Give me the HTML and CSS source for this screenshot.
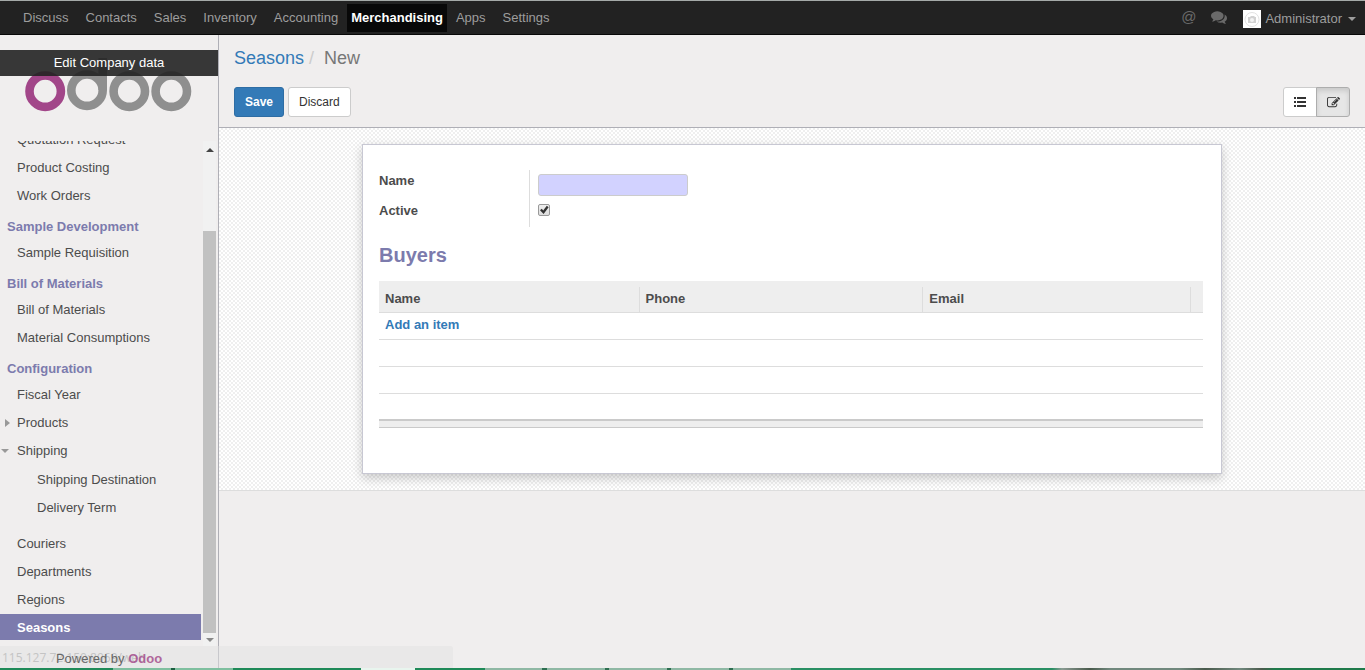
FILE: index.html
```html
<!DOCTYPE html>
<html lang="en">
<head>
<meta charset="utf-8">
<title>Seasons - Odoo</title>
<link rel="stylesheet" href="styles.css">
</head>
<body>
<header class="navbar">
  <nav class="apps">
    <a href="#">Discuss</a>
    <a href="#">Contacts</a>
    <a href="#">Sales</a>
    <a href="#">Inventory</a>
    <a href="#">Accounting</a>
    <a href="#" class="active">Merchandising</a>
    <a href="#">Apps</a>
    <a href="#">Settings</a>
  </nav>
  <div class="systray">
    <button class="tray-button at" aria-label="Mentions">@</button>
    <button class="tray-button" aria-label="Conversations">
      <svg class="icon-comments" viewBox="0 0 1792 1792"><path d="M1408 768q0 139-94 257t-256.500 186.500-353.500 68.500q-86 0-176-16-124 88-278 128-36 9-86 16h-3q-11 0-20.500-8t-11.500-21q-1-3-1-6.500t.5-6.500 2-6l2.500-5 3.500-5.500 4-5 4.500-5 4-4.500q5-6 23-25t26-29.500 22.500-29 25-38.500 20.500-44q-124-72-195-177t-71-224q0-139 94-257t256.500-186.500 353.500-68.500 353.500 68.500 256.500 186.500 94 257zm384 256q0 120-71 224.500t-195 176.500q10 24 20.500 44t25 38.500 22.500 29 26 29.500 23 25q1 1 4 4.500t4.500 5 4 5 3.500 5.500l2.500 5 2 6 .5 6.500-1 6.500q-3 14-13 22t-22 7q-50-7-86-16-154-40-278-128-90 16-176 16-271 0-472-132 58 4 88 4 161 0 309-45t264-129q125-92 192-212t67-254q0-77-23-152 129 71 204 178t75 230z"/></svg>
    </button>
    <button class="user-menu">
      <svg class="avatar" viewBox="0 0 18 18"><path fill="#fff" d="M0 0h18v18H0z"/><circle cx="9" cy="9.500" r="7" fill="none" stroke="#e2e2e2"/><path fill="#d2d2d2" d="M5 7h2l1-1h3l1 1h1v6H5z"/><circle cx="9" cy="10" r="2" fill="#f4f4f4"/></svg>
      Administrator
      <span class="caret"></span>
    </button>
  </div>
</header>

<div class="body">
  <aside class="sidebar">
    <div class="brand">
      <svg class="logo" viewBox="0 0 218 62" role="img" aria-label="Odoo">
        <g fill="none" stroke="#8f8f8f" stroke-width="8.600">
          <circle cx="45.200" cy="41.200" r="15.700" stroke="#a24689"/>
          <circle cx="87" cy="40.200" r="15.700"/>
          <path d="M102.700 8v32"/>
          <circle cx="129.300" cy="41.200" r="15.700"/>
          <circle cx="171.300" cy="41.200" r="15.700"/>
        </g>
      </svg>
      <a href="#" class="edit-company">Edit Company data</a>
    </div>
    <div class="menu-area">
      <nav class="menu">
        <ul>
          <li><a href="#">Quotation Request</a></li>
          <li><a href="#">Product Costing</a></li>
          <li><a href="#">Work Orders</a></li>
        </ul>
        <h2>Sample Development</h2>
        <ul><li><a href="#">Sample Requisition</a></li></ul>
        <h2>Bill of Materials</h2>
        <ul>
          <li><a href="#">Bill of Materials</a></li>
          <li><a href="#">Material Consumptions</a></li>
        </ul>
        <h2>Configuration</h2>
        <ul>
          <li><a href="#">Fiscal Year</a></li>
          <li><a href="#" class="closed">Products</a></li>
          <li><a href="#" class="open">Shipping</a>
            <ul class="submenu">
              <li><a href="#">Shipping Destination</a></li>
              <li><a href="#">Delivery Term</a></li>
            </ul>
          </li>
          <li><a href="#">Couriers</a></li>
          <li><a href="#">Departments</a></li>
          <li><a href="#">Regions</a></li>
          <li><a href="#" class="current">Seasons</a></li>
        </ul>
      </nav>
      <div class="scrollbar">
        <span class="arrow up"></span>
        <span class="thumb"></span>
        <span class="arrow down"></span>
      </div>
    </div>
    <footer class="powered">Powered by <a href="#">Odoo</a></footer>
  </aside>

  <main class="content">
    <div class="control-panel">
      <ol class="breadcrumb">
        <li><a href="#">Seasons</a></li>
        <li>New</li>
      </ol>
      <div class="toolbar">
        <div class="actions">
          <button class="btn primary">Save</button>
          <button class="btn">Discard</button>
        </div>
        <div class="switcher">
          <button class="view" aria-label="List"><svg viewBox="0 0 14 14"><path d="M1 2h2v2H1zM1 6h2v2H1zM1 10h2v2H1zM4 2h9v2H4zM4 6h9v2H4zM4 10h9v2H4z"/></svg></button>
          <button class="view on" aria-label="Form"><svg viewBox="0 0 1792 1792"><path d="M888 1184l116-116-152-152-116 116v56h96v96h56zm440-720q-16-16-33 1l-350 350q-17 17-1 33t33-1l350-350q17-17 1-33zm80 594v190q0 119-84.500 203.500t-203.500 84.500h-832q-119 0-203.500-84.500t-84.500-203.500v-832q0-119 84.500-203.500t203.500-84.500h832q63 0 117 25 15 7 18 23 3 17-9 29l-49 49q-14 14-32 8-23-6-45-6h-832q-66 0-113 47t-47 113v832q0 66 47 113t113 47h832q66 0 113-47t47-113v-126q0-13 9-22l64-64q15-15 35-7t20 29zm-96-738l288 288-672 672h-288v-288zm444 132l-92 92-288-288 92-92q28-28 68-28t68 28l152 152q28 28 28 68t-28 68z"/></svg></button>
        </div>
      </div>
    </div>
    <div class="form-area">
      <form class="sheet">
        <div class="fields">
          <div class="labels">
            <label for="name">Name</label>
            <label for="active">Active</label>
          </div>
          <div class="values">
            <input type="text" id="name" class="text">
            <input type="checkbox" id="active" class="check" checked>
          </div>
        </div>
        <h1>Buyers</h1>
        <table class="list">
          <colgroup><col class="c-name"><col class="c-phone"><col class="c-email"><col class="c-delete"></colgroup>
          <thead><tr><th><div>Name</div></th><th><div>Phone</div></th><th><div>Email</div></th><th><div></div></th></tr></thead>
          <tbody>
            <tr><td colspan="4"><a href="#">Add an item</a></td></tr>
            <tr><td colspan="4"></td></tr>
            <tr><td colspan="4"></td></tr>
            <tr><td colspan="4"></td></tr>
          </tbody>
          <tfoot><tr><td colspan="4"></td></tr></tfoot>
        </table>
      </form>
    </div>
  </main>
</div>
<div class="status-bubble">115.127.72.150:8069/web</div>
<div class="taskbar"></div>
</body>
</html>
```
FILE: styles.css
```css
* { box-sizing: border-box; }

body {
  margin: 0;
  height: 100vh;
  display: flex;
  flex-direction: column;
  position: relative;
  overflow: hidden;
  background: #f0eeee;
  color: #4c4c4c;
  font: 13px/20px "Liberation Sans", Arial, sans-serif;
}

a { color: #337ab7; text-decoration: none; }
button { font: inherit; cursor: pointer; }
ul, ol { list-style: none; margin: 0; padding: 0; }

/* Top bar */
.navbar {
  display: flex;
  justify-content: space-between;
  flex: none;
  height: 35px;
  padding: 3px 9px 0 15px;
  background: #222;
  border-top: 1px solid #a5aaa8;
  border-bottom: 1px solid #080808;
}
.apps { display: flex; gap: 1px; }
.apps a { height: 28px; padding: 0 8px; line-height: 27px; color: #9d9d9d; }
.apps .active { padding: 0 4px; background: #080808; color: #fff; font-weight: bold; }
.systray { display: flex; align-items: center; }
.systray button { border: 0; background: none; color: #9d9d9d; }
.systray .tray-button { height: 28px; padding: 0 8px 4px; color: #6a6a6a; }
.systray .at { padding: 0 7px 4px; font-size: 15px; line-height: 22px; }
.icon-comments { display: block; width: 16px; height: 16px; fill: #6a6a6a; }
.user-menu { display: flex; align-items: center; gap: 4px; padding: 0 0 0 8px; }
.avatar { width: 18px; height: 18px; }
.caret {
  margin-left: 2px;
  border: 4px solid transparent;
  border-top-color: #9d9d9d;
  border-bottom: 0;
}

.body { flex: 1; display: flex; min-height: 0; }

/* Sidebar */
.sidebar {
  flex: none;
  width: 219px;
  display: flex;
  flex-direction: column;
  border-right: 1px solid #afafb6;
}
.brand { position: relative; margin-top: 15px; height: 91px; flex: none; }
.logo { display: block; width: 100%; }
.edit-company {
  position: absolute;
  inset: 0 0 auto;
  height: 26px;
  line-height: 25px;
  text-align: center;
  color: #fff;
  background: rgba(34, 34, 34, 0.9);
}
.menu-area { flex: 1; min-height: 0; display: flex; gap: 2px; padding-right: 2px; }
.menu {
  flex: 1;
  display: flex;
  flex-direction: column;
  justify-content: flex-end;
  overflow: hidden;
  padding-bottom: 6px;
}
.menu ul { display: flex; flex-direction: column; gap: 2px; }
.menu h2 {
  height: 26px;
  margin: 5px 0 0;
  padding-left: 7px;
  font-size: 13px;
  line-height: 28px;
  color: #7c7bad;
}
.menu a { display: block; height: 26px; padding-left: 17px; line-height: 28px; color: #4c4c4c; }
.menu .submenu { padding: 3px 0 8px; }
.menu .submenu a { padding-left: 37px; }
.menu .current { background: #7c7bad; color: #fff; font-weight: bold; }
.closed::before, .open::before {
  content: "";
  float: left;
  margin: 10px 0 0 -12px;
  border: 4px solid transparent;
  border-left: 5px solid #999;
  border-right: 0;
}
.open::before {
  margin: 12px 0 0 -16px;
  border: 4px solid transparent;
  border-top-color: #999;
  border-bottom: 0;
}
.scrollbar {
  width: 13px;
  display: flex;
  flex-direction: column;
  align-items: center;
  padding: 7px 0 4px;
  background: #f1f1f1;
}
.arrow { border: 4px solid transparent; }
.arrow.up { border-top: 0; border-bottom-color: #444; }
.arrow.down { border-bottom: 0; border-top-color: #888; margin-top: 5px; }
.thumb { flex: 1; width: 13px; margin-top: 79px; background: #c1c1c1; }
.powered {
  position: relative;
  z-index: 2;
  flex: none;
  height: 22px;
  line-height: 26px;
  text-align: center;
  color: #666;
}
.powered a { color: #a24689; opacity: 0.8; font-weight: bold; }

/* Control panel */
.content { flex: 1; min-width: 0; }
.control-panel { padding: 13px 15px 10px; border-bottom: 1px solid #afafb6; }
.breadcrumb { display: flex; font-size: 18px; color: #777; }
.breadcrumb li + li::before { content: "/"; padding: 0 10px 0 5px; color: #ccc; }
.toolbar { display: flex; justify-content: space-between; margin-top: 19px; }
.actions { display: flex; gap: 4px; }
.btn {
  height: 30px;
  padding: 0 10px;
  border: 1px solid #ccc;
  border-radius: 3px;
  background: #fff;
  color: #333;
  font-size: 12px;
}
.btn.primary { background: #337ab7; border-color: #2e6da4; color: #fff; font-weight: bold; }
.switcher { display: flex; }
.view {
  display: flex;
  align-items: center;
  justify-content: center;
  width: 34px;
  height: 30px;
  padding: 0;
  border: 1px solid #ccc;
  border-radius: 3px 0 0 3px;
  background: #fff;
}
.view.on {
  margin-left: -1px;
  border-color: #adadad;
  border-radius: 0 3px 3px 0;
  background: #e6e6e6;
  box-shadow: inset 0 3px 5px rgba(0, 0, 0, 0.125);
}
.view svg { width: 14px; height: 14px; fill: #333; }
.view.on svg { width: 13px; height: 13px; }

/* Form */
.form-area {
  padding: 16px;
  border-bottom: 1px solid #ddd;
  background: repeating-conic-gradient(#efefef 0 25%, #fff 0 50%) 0 0 / 4px 4px;
}
.sheet {
  max-width: 860px;
  min-height: 330px;
  margin: 0 auto;
  padding: 25px 18px 45px 16px;
  border: 1px solid #c8c8d3;
  background: #fff;
  box-shadow: 0 4px 10px rgba(0, 0, 0, 0.2);
}
.fields { display: flex; height: 57px; font-weight: bold; }
.labels {
  display: flex;
  flex-direction: column;
  gap: 10px;
  width: 151px;
  padding-top: 1px;
  border-right: 1px solid #ddd;
}
.values { display: flex; flex-direction: column; gap: 8px; padding: 4px 8px; }
.text {
  width: 150px;
  height: 22px;
  padding: 2px 4px;
  border: 1px solid #ccc;
  border-radius: 3px;
  background: #d2d2ff;
}
.check {
  appearance: none;
  width: 12px;
  height: 12px;
  margin: 0;
  border: 1px solid #999;
  border-radius: 2px;
  background: linear-gradient(#eee, #ddd);
}
.check:checked::before {
  content: "";
  display: block;
  height: 10px;
  background: #333;
  clip-path: polygon(10% 52%, 28% 38%, 42% 55%, 78% 8%, 96% 22%, 46% 90%);
}
.sheet h1 { margin: 16px 0 14px; font-size: 20px; line-height: 24px; color: #7c7bad; }
.list { width: 100%; table-layout: fixed; border-collapse: separate; border-spacing: 0; }
.c-name { width: 32%; }
.c-phone { width: 35%; }
.c-email { width: 33%; }
.c-delete { width: 13px; }
.list th {
  padding: 6px 0 0;
  text-align: left;
  background: #eee;
  border-bottom: 1px solid #ddd;
}
.list th div { height: 25px; line-height: 23px; padding-left: 6px; }
.list th + th div { border-left: 1px solid #ddd; }
.list tbody td { height: 27px; padding: 0 6px 2px; border-bottom: 1px solid #ddd; font-weight: bold; }
.list tbody tr:last-child td { height: 25px; border-bottom: 0; }
.list tfoot td { height: 9px; padding: 0; background: #eee; border-top: 2px solid #cacaca; border-bottom: 1px solid #cacaca; }

/* Link preview over the page's bottom left corner */
.status-bubble {
  position: absolute;
  left: 0;
  bottom: 2px;
  width: 453px;
  height: 22px;
  padding-left: 2px;
  border-radius: 0 3px 0 0;
  background: rgba(225, 225, 225, 0.5);
  color: #c4c4c4;
  font: 12px/24px "Open Sans", sans-serif;
}
.taskbar {
  flex: none;
  height: 2px;
  background: linear-gradient(90deg, #1f8a58 0 113px, #7fbf9f 113px 171px, #1b5d3f 171px 175px, #7fbf9f 175px 233px, #1f8a58 233px 361px, #e8f5ee 361px 415px, #1f8a58 415px 485px, #8fb8a4 485px 542px, #2d6e50 542px 547px, #8fb8a4 547px 605px, #2d6e50 605px 609px, #8fb8a4 609px 667px, #2d6e50 667px 671px, #8fb8a4 671px 729px, #2d6e50 729px 733px, #8fb8a4 733px 791px, #2a8f63 791px 1052px, #8b9b93 1062px, #4a5a4c 1090px, #71887d 1110px 1180px, #4a5a4c 1205px, #71887d 1240px, #4a5a4c 1262px, #1f7a4a 1275px);
}
```
